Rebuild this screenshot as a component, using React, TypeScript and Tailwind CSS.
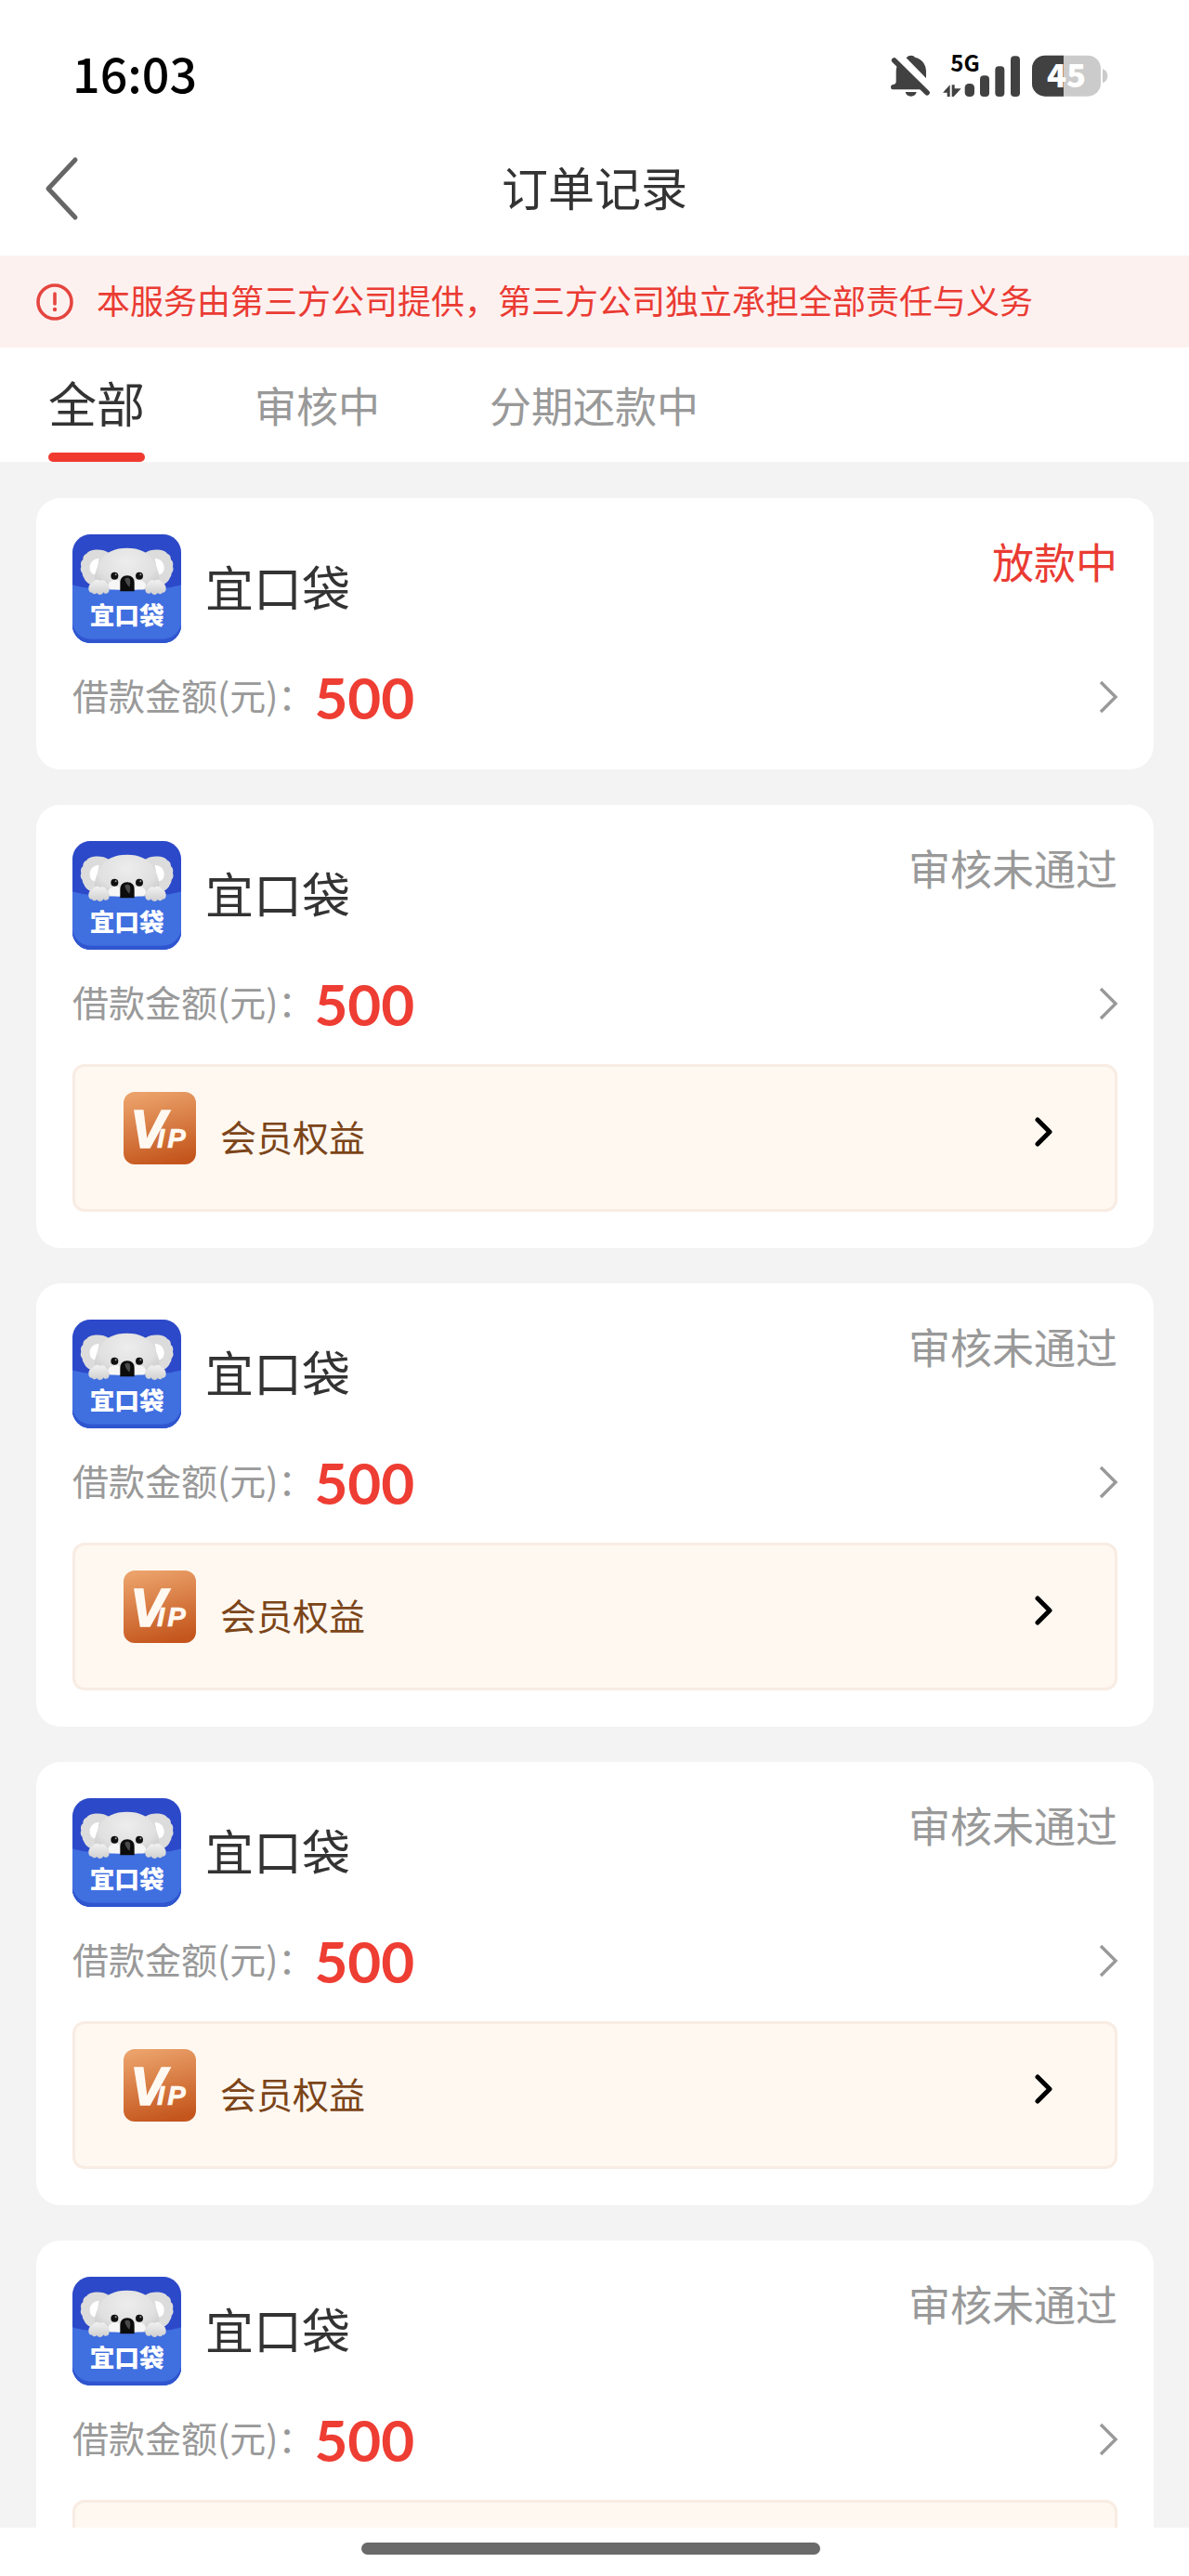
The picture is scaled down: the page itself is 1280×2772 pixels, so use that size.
import React, { useState } from "react";

const tabs = ["全部", "审核中", "分期还款中"];

type Order = {
  id: number;
  name: string;
  amount: number;
  status: string;
  active: boolean;
  vip: boolean;
};

const orders: Order[] = [
  { id: 1, name: "宜口袋", amount: 500, status: "放款中", active: true, vip: false },
  { id: 2, name: "宜口袋", amount: 500, status: "审核未通过", active: false, vip: true },
  { id: 3, name: "宜口袋", amount: 500, status: "审核未通过", active: false, vip: true },
  { id: 4, name: "宜口袋", amount: 500, status: "审核未通过", active: false, vip: true },
  { id: 5, name: "宜口袋", amount: 500, status: "审核未通过", active: false, vip: true },
];

function BellOffIcon() {
  return (
    <svg className="h-[46px] w-[44px]" viewBox="0 0 132 138" aria-hidden="true">
      <path
        d="M65 2c6 0 11 2 13 6 22 5 36 22 36 46v30c0 10 8 12 8 20 0 5-4 8-8 8H8c-5 0-8-3-8-8s3-7 8-8c7-1 9-4 9-12V54C17 32 31 13 52 8c2-4 7-6 13-6Z"
        fill="#414141"
      />
      <path d="M47 120h36c-2 9-9 14-18 14s-16-5-18-14Z" fill="#414141" />
      <path d="M26 4 134 114" stroke="#fff" strokeWidth="26" />
      <path d="M11 18 117 122" stroke="#414141" strokeWidth="17" strokeLinecap="round" />
    </svg>
  );
}

function SignalIcon() {
  return (
    <svg className="h-[46px] w-[84px] overflow-visible" viewBox="0 0 252 138" aria-hidden="true">
      <text
        x="25"
        y="55"
        fontSize="72"
        fontWeight="700"
        fill="#000"
        style={{ fontFamily: '"Noto Sans CJK SC", sans-serif' }}
      >
        5G
      </text>
      <g fill="#414141">
        <path d="M0 122 23 97v38h-9v-13Z" />
        <path d="M29 97h9v12h21L35 135h-6Z" />
        <rect x="71" y="93" width="31" height="42" rx="13" />
        <rect x="120" y="67" width="30" height="68" rx="12" />
        <rect x="169" y="37" width="30" height="98" rx="12" />
        <rect x="219" y="4" width="30" height="131" rx="12" />
      </g>
    </svg>
  );
}

function BatteryIcon() {
  return (
    <svg className="h-[46px] w-[82px] overflow-visible" viewBox="0 0 246 138" role="img" aria-label="电量 45%">
      <rect x="0" y="2" width="222" height="132" rx="42" fill="#cbcbcb" />
      <path d="M42 2h60v132H42a42 42 0 0 1-42-42V44A42 42 0 0 1 42 2Z" fill="#414141" />
      <path d="M228 46c9 2 16 11 16 22s-7 20-16 22Z" fill="#cbcbcb" />
      <text
        x="111"
        y="105"
        textAnchor="middle"
        fontSize="104"
        fontWeight="900"
        fill="#fff"
        style={{ fontFamily: '"Noto Sans CJK SC", sans-serif' }}
      >
        45
      </text>
    </svg>
  );
}

function KoalaLogo() {
  return (
    <svg className="size-[117px] shrink-0" viewBox="0 0 351 351" role="img" aria-label="宜口袋">
      <defs>
        <clipPath id="logo-shape">
          <rect width="351" height="351" rx="58" />
        </clipPath>
        <radialGradient id="fur" cx="0.5" cy="0.3" r="0.75">
          <stop offset="0" stopColor="#ededed" />
          <stop offset="0.6" stopColor="#e0e0e0" />
          <stop offset="1" stopColor="#c2c2c2" />
        </radialGradient>
        <linearGradient id="paw" x1="0" y1="0" x2="0" y2="1">
          <stop offset="0" stopColor="#f2f2f2" />
          <stop offset="1" stopColor="#cfcfcf" />
        </linearGradient>
      </defs>
      <g clipPath="url(#logo-shape)">
        <rect width="351" height="351" fill="#2c49c9" />
        <path
          d="M118 60C98 46 58 46 46 62c-10 4-12 12-12 20-8 6-8 14-6 22-4 10 0 16 4 22 0 10 6 14 8 20 8 14 26 22 54 20Z"
          fill="#dcdcdc"
        />
        <path
          d="M234 60c20-14 60-14 72 2 10 4 12 12 12 20 8 6 8 14 6 22 4 10 0 16-4 22 0 10-6 14-8 20-8 14-26 22-54 20Z"
          fill="#dcdcdc"
        />
        <path d="M86 78c-18 0-32 14-30 32 1 14 10 20 20 20Z" fill="#fff" />
        <path d="M266 78c18 0 32 14 30 32-1 14-10 20-20 20Z" fill="#fff" />
        <path
          d="M176 44c40 0 70 14 84 40 10 18 20 36 20 56 0 36-36 54-104 54S72 176 72 140c0-20 10-38 20-56 14-26 44-40 84-40Z"
          fill="url(#fur)"
        />
        <ellipse cx="139" cy="165" rx="24" ry="18" fill="#f6f6f6" />
        <ellipse cx="213" cy="165" rx="24" ry="18" fill="#f6f6f6" />
        <circle cx="136" cy="134" r="12" fill="#111" />
        <circle cx="216" cy="134" r="12" fill="#111" />
        <circle cx="140" cy="130" r="3" fill="#999" />
        <circle cx="220" cy="130" r="3" fill="#999" />
        <path d="M0 163c60 22 291 22 351 0v188H0Z" fill="#406fe0" />
        <path d="M0 290c10 34 34 48 64 48h223c30 0 54-14 64-48v61H0Z" fill="#2f55cf" />
        <path d="M154 184v-28c0-14 9-23 23-23s23 9 23 23v28Z" fill="#0c0c0c" />
        <path d="M169 143c7-4 15-3 17 3 2 9 0 16-2 24-8-8-14-17-15-27Z" fill="#4a4a4a" />
        <path
          d="M52 176c0-14 8-20 14-21 4-9 16-12 23-5 8-5 18-1 20 7 8 4 11 16 9 27-3 9-14 10-18 3-4 10-17 10-21 2-6 6-13 4-15-1-8 1-12-5-12-12Z"
          fill="url(#paw)"
        />
        <path
          d="M302 176c0-14-8-20-14-21-4-9-16-12-23-5-8-5-18-1-20 7-8 4-11 16-9 27 3 9 14 10 18 3 4 10 17 10 21 2 6 6 13 4 15-1 8 1 12-5 12-12Z"
          fill="url(#paw)"
        />
        <text
          x="56"
          y="290"
          fontSize="80"
          fontWeight="900"
          fill="#fff"
          style={{ fontFamily: '"Noto Sans CJK SC", sans-serif' }}
        >
          宜口袋
        </text>
      </g>
    </svg>
  );
}

function VipIcon() {
  return (
    <svg className="size-[78px] shrink-0" viewBox="0 0 234 234" aria-hidden="true">
      <defs>
        <linearGradient id="vip-bg" x1="0.3" y1="0" x2="0.55" y2="1">
          <stop offset="0" stopColor="#eba26a" />
          <stop offset="1" stopColor="#c4561d" />
        </linearGradient>
      </defs>
      <rect width="234" height="234" rx="36" fill="url(#vip-bg)" />
      <text
        x="22"
        y="179"
        fontSize="174"
        fill="#fff9f2"
        stroke="#fff9f2"
        strokeWidth="5"
        fontStyle="italic"
        fontWeight="700"
        style={{ fontFamily: '"Liberation Sans", sans-serif' }}
      >
        V
        <tspan x="108" fontSize="88" strokeWidth="2">
          I
        </tspan>
        <tspan x="142" fontSize="88" strokeWidth="2">
          P
        </tspan>
      </text>
    </svg>
  );
}

function OrderCard({ order }: { order: Order }) {
  return (
    <article className="shrink-0 rounded-[26px] bg-white p-[39px]">
      <div className="flex items-start justify-between">
        <div className="flex items-center gap-[26px]">
          <KoalaLogo />
          <h2 className="pb-[6px] text-[52px] leading-[58px] text-[#333]">{order.name}</h2>
        </div>
        <span
          className={
            order.active
              ? "text-[45px] leading-[58px] text-[#ea3b33]"
              : "text-[45px] leading-[58px] text-[#999]"
          }
        >
          {order.status}
        </span>
      </div>
      <a href="#order" className="mt-[19px] flex h-[78px] items-center">
        <span className="pb-[6px] text-[39px] leading-[58px] text-[#999]">借款金额(元)：</span>
        <span className="font-['Lato'] text-[62px] leading-[74px] font-bold text-[#ee3d33]">
          {order.amount}
        </span>
        <svg
          className="ml-auto h-[34px] w-[18px] overflow-visible"
          viewBox="0 0 18 34"
          fill="none"
          aria-hidden="true"
        >
          <path d="M0 1 16 17 0 33" stroke="#999" strokeWidth="3.4" />
        </svg>
      </a>
      {order.vip && (
        <a
          href="#vip"
          className="mt-[26px] flex h-[159px] items-center rounded-[13px] border-[3px] border-[#f8ece3] bg-[#fef8f1] pr-[66px] pl-[52px]"
        >
          <span className="flex h-full items-start pt-[27px]">
            <VipIcon />
          </span>
          <span className="ml-[26px] pb-[6px] text-[39px] leading-[58px] text-[#7c4519]">
            会员权益
          </span>
          <span className="ml-auto flex h-full items-start pt-[54px]">
            <svg className="h-[32px] w-[20px]" viewBox="0 0 20 32" fill="none" aria-hidden="true">
              <path
                d="M3 3 16 16 3 29"
                stroke="#000"
                strokeWidth="5"
                strokeLinecap="round"
                strokeLinejoin="round"
              />
            </svg>
          </span>
        </a>
      )}
    </article>
  );
}

export default function App() {
  const [current, setCurrent] = useState(0);
  return (
    <div className="flex h-screen flex-col overflow-hidden bg-white font-['Noto_Sans_CJK_SC',sans-serif]">
      <div className="flex h-[131px] shrink-0 items-center justify-between pt-8 pr-[87px] pl-[78px]">
        <time className="pb-[8px] text-[52px] leading-[64px] font-medium text-black">16:03</time>
        <div className="flex items-center gap-3">
          <BellOffIcon />
          <SignalIcon />
          <BatteryIcon />
        </div>
      </div>

      <header className="grid h-[144px] shrink-0 grid-cols-[1fr_auto_1fr] items-center px-[46px]">
        <button type="button" aria-label="返回" className="justify-self-start">
          <svg className="h-[70px] w-[42px]" viewBox="0 0 42 70" fill="none" aria-hidden="true">
            <path
              d="M35 4 6 35l29 31"
              stroke="#666"
              strokeWidth="5"
              strokeLinecap="round"
              strokeLinejoin="round"
            />
          </svg>
        </button>
        <h1 className="pb-[6px] text-[50px] leading-[60px] text-[#333]">订单记录</h1>
      </header>

      <div className="flex h-[99px] shrink-0 items-center gap-[25px] bg-[#fdf1f0] px-[39px] text-[#ea3b33]">
        <svg className="size-[40px] shrink-0" viewBox="0 0 40 40" fill="none" aria-hidden="true">
          <circle cx="20" cy="20" r="18" stroke="#e5453f" strokeWidth="3.6" />
          <path d="M20 11v11" stroke="#e5453f" strokeWidth="3.6" strokeLinecap="round" />
          <circle cx="20" cy="28" r="2.200" fill="#e5453f" />
        </svg>
        <p className="pb-[6px] text-[36px] leading-[48px]">
          本服务由第三方公司提供，第三方公司独立承担全部责任与义务
        </p>
      </div>

      <nav className="flex h-[123px] shrink-0 gap-[118px] px-[52px]">
        {tabs.map((tab, i) => (
          <button
            key={tab}
            type="button"
            onClick={() => setCurrent(i)}
            className={
              i === current
                ? "flex flex-col items-center justify-between pt-[29px] text-[52px] leading-[60px] text-[#333]"
                : "flex flex-col items-center justify-between pt-[32px] text-[45px] leading-[60px] text-[#999]"
            }
          >
            {tab}
            {i === current && <span className="h-[10px] w-full rounded-full bg-[#f03a30]" />}
          </button>
        ))}
      </nav>

      <main className="flex min-h-0 flex-1 flex-col gap-[38px] overflow-hidden bg-[#f3f3f3] pt-[39px] pr-[38px] pl-[39px]">
        {orders.map((order) => (
          <OrderCard key={order.id} order={order} />
        ))}
      </main>

      <footer className="flex h-[52px] shrink-0 justify-center bg-white pt-[16px] pr-[8px]">
        <div className="h-[13px] w-[494px] rounded-full bg-[#6a6a6a]" />
      </footer>
    </div>
  );
}
